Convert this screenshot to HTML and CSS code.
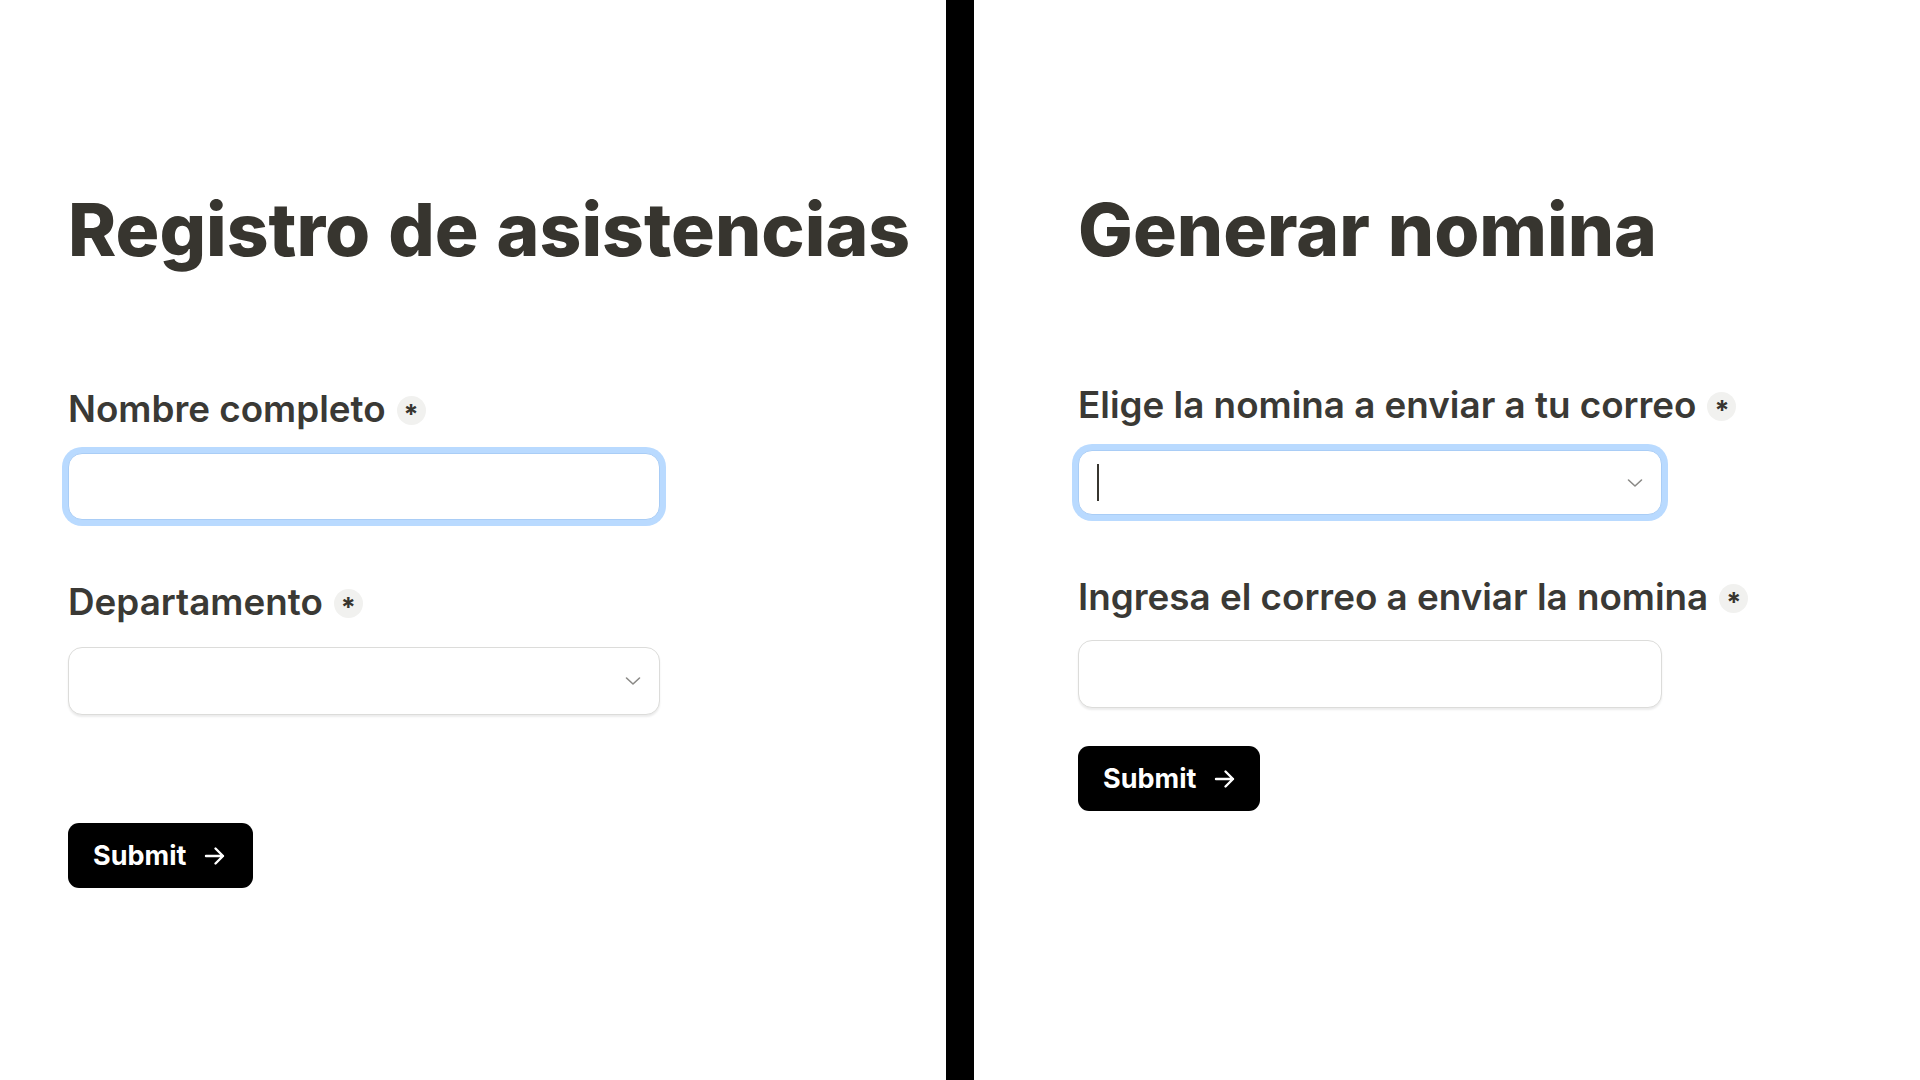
FILE: index.html
```html
<!DOCTYPE html>
<html lang="es">
<head>
<meta charset="utf-8">
<title>Formularios</title>
<link rel="stylesheet" href="styles.css">
</head>
<body>
<div class="page">
  <section class="panel panel-left">
    <h1 class="title">Registro de asistencias</h1>
    <div class="field field-first">
      <div class="label-row"><span class="label">Nombre completo</span><span class="req">*</span></div>
      <div class="control control-focus"></div>
    </div>
    <div class="field field-second">
      <div class="label-row"><span class="label">Departamento</span><span class="req">*</span></div>
      <div class="control control-select">
        <svg class="chev" width="16" height="10" viewBox="0 0 16 10"><path d="M1.5 2 L8 8 L14.5 2" fill="none" stroke="#8a8986" stroke-width="1.6" stroke-linecap="round" stroke-linejoin="round"/></svg>
      </div>
    </div>
    <button class="submit submit-left">Submit <svg class="arrow" width="22" height="20" viewBox="0 0 22 20"><path d="M2 10 H19 M11.5 2.5 L19 10 L11.5 17.5" fill="none" stroke="#fff" stroke-width="2.4" stroke-linecap="round" stroke-linejoin="round"/></svg></button>
  </section>
  <div class="divider"></div>
  <section class="panel panel-right">
    <h1 class="title">Generar nomina</h1>
    <div class="field field-first-r">
      <div class="label-row"><span class="label">Elige la nomina a enviar a tu correo</span><span class="req">*</span></div>
      <div class="control control-focus control-select control-r">
        <span class="caret"></span>
        <svg class="chev" width="16" height="10" viewBox="0 0 16 10"><path d="M1.5 2 L8 8 L14.5 2" fill="none" stroke="#8a8986" stroke-width="1.6" stroke-linecap="round" stroke-linejoin="round"/></svg>
      </div>
    </div>
    <div class="field field-second-r">
      <div class="label-row"><span class="label">Ingresa el correo a enviar la nomina</span><span class="req">*</span></div>
      <div class="control control-r control-tall"></div>
    </div>
    <button class="submit submit-right">Submit <svg class="arrow" width="22" height="20" viewBox="0 0 22 20"><path d="M2 10 H19 M11.5 2.5 L19 10 L11.5 17.5" fill="none" stroke="#fff" stroke-width="2.4" stroke-linecap="round" stroke-linejoin="round"/></svg></button>
  </section>
</div>
</body>
</html>
```
FILE: styles.css
```css
* { box-sizing: border-box; }
html, body { margin: 0; padding: 0; background: #fff; }
body { font-family: Inter, "Noto Sans", sans-serif; color: #37352f; }
.page { display: flex; width: 1920px; height: 1080px; }
.panel { flex: 0 0 946px; display: flex; flex-direction: column; align-items: flex-start; padding-top: 187px; }
.panel-left { padding-left: 68px; }
.panel-right { padding-left: 104px; }
.divider { flex: 0 0 28px; background: #000; }
.title { margin: 0; font-size: 73px; line-height: 86px; font-weight: 800; letter-spacing: 0; word-spacing: 2px; color: #37352f; white-space: nowrap; }
.field { display: flex; flex-direction: column; }
.label-row { display: flex; align-items: center; height: 40px; gap: 11px; }
.label { font-size: 36.8px; font-weight: 600; color: #3a3935; white-space: nowrap; }
.req { flex: none; width: 29px; height: 29px; border-radius: 50%; background: #f1f1ef; font-size: 27px; font-weight: 700; line-height: 1; display: flex; align-items: center; justify-content: center; padding-top: 9px; margin-top: 4px; color: #37352f; }
.control { width: 592px; height: 67px; margin-top: 25px; border: 1px solid #dcdcda; border-radius: 14px; background: #fff; box-shadow: 0 2px 2px rgba(15,15,15,0.08); position: relative; display: flex; align-items: center; }
.control-focus { border: 1px solid #a9cdf6; box-shadow: 0 0 0 6px #b9daff; }
.control-select { justify-content: flex-end; padding-right: 18px; }
.control-select .chev { flex: none; }
.control-r { width: 584px; height: 65px; margin-top: 26px; }
.control-tall { height: 68px; margin-top: 24px; }
.control-select.control-r { justify-content: space-between; padding-left: 18px; }
.caret { width: 2px; height: 37px; background: #37352f; }
.field-first { margin-top: 115px; }
.field-second { margin-top: 61px; }
.field-second .control { height: 68px; margin-top: 26px; }
.field-first-r { margin-top: 111px; }
.field-second-r { margin-top: 61px; }
.submit { display: flex; align-items: center; gap: 18px; height: 65px; padding: 0 26px 0 25px; background: #000; color: #fff; border: none; border-radius: 11px; font-family: Inter, "Noto Sans", sans-serif; font-size: 27px; font-weight: 700; }
.submit-left { margin-top: 108px; width: 185px; }
.submit-right { margin-top: 38px; width: 182px; }
.arrow { flex: none; }
```
